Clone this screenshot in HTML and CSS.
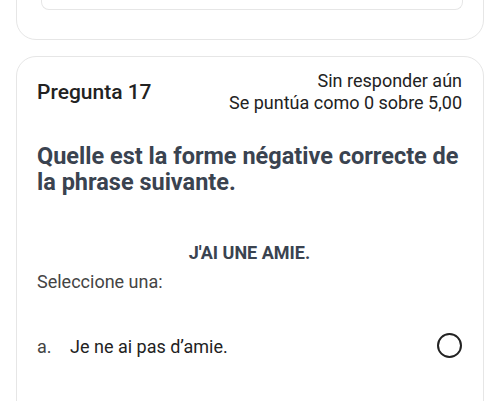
FILE: index.html
```html
<!DOCTYPE html>
<html lang="es">

<head>
    <meta charset="UTF-8">
    <meta name="viewport" content="width=device-width, initial-scale=1.0">
    <title>Cuestionario</title>
    <link rel="stylesheet" href="styles.css">
</head>

<body>
    <div class="page">
        <div class="card card-prev">
            <div class="inner-box"></div>
        </div>

        <div class="card question">
            <div class="question-header">
                <div class="question-number">Pregunta 17</div>
                <div class="question-info">
                    <div>Sin responder aún</div>
                    <div>Se puntúa como 0 sobre 5,00</div>
                </div>
            </div>

            <div class="question-text">Quelle est la forme négative correcte de la phrase suivante.</div>
            <div class="question-phrase">J'AI UNE AMIE.</div>
            <div class="prompt">Seleccione una:</div>

            <label class="answer">
                <span class="answer-letter">a.</span>
                <span class="answer-text">Je ne ai pas d’amie.</span>
                <span class="radio"></span>
            </label>
        </div>
    </div>
</body>

</html>
```

FILE: styles.css
```css
body {
    font-family: Roboto, "Liberation Sans", sans-serif;
    background-color: #fff;
    color: #222;
    margin: 0;
}

.page {
    padding: 0 16px;
}

.card {
    border: 1px solid #e6e6e6;
    border-radius: 20px;
    background-color: #fff;
}

.card-prev {
    margin-top: -60px;
    padding: 0 20px 29px 24px;
}

.inner-box {
    height: 68px;
    border: 1px solid #e6e6e6;
    border-top: none;
    border-radius: 0 0 8px 8px;
}

.question {
    margin-top: 16px;
    padding: 13px 21px 80px 20px;
}

.question-header {
    display: flex;
    justify-content: space-between;
    align-items: center;
}

.question-number {
    font-size: 21px;
    font-weight: 500;
    color: #222;
}

.question-info {
    text-align: right;
    font-size: 18px;
    line-height: 22px;
    color: #222;
}

.question-text {
    margin-top: 29px;
    font-size: 23.5px;
    line-height: 26px;
    font-weight: bold;
    color: #3a4350;
}

.question-phrase {
    margin-top: 46px;
    text-align: center;
    font-size: 18px;
    line-height: 24px;
    font-weight: bold;
    color: #3a4350;
}

.prompt {
    margin-top: 5px;
    font-size: 18px;
    line-height: 24px;
    color: #444;
}

.answer {
    display: flex;
    align-items: center;
    margin-top: 41px;
    font-size: 18px;
    line-height: 24px;
}

.answer-letter {
    width: 33px;
    color: #444;
}

.answer-text {
    flex: 1;
    color: #222;
}

.radio {
    width: 21px;
    height: 21px;
    border: 2.5px solid #222;
    border-radius: 50%;
    margin: -3px 0 0 0;
}
```
